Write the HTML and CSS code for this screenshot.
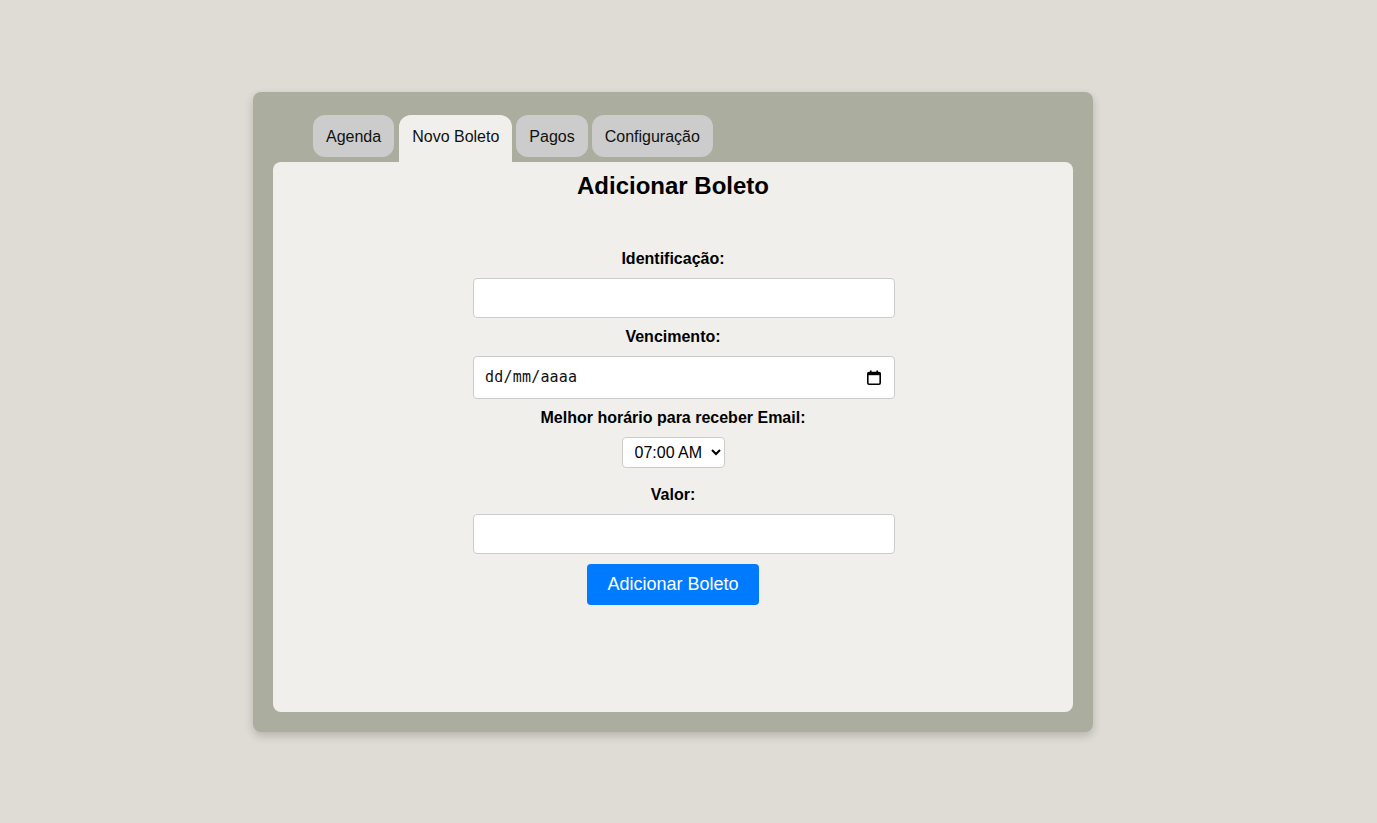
FILE: index.html
```html
<!DOCTYPE html>
<html lang="pt-BR">
<head>
<meta charset="utf-8">
<title>Boletos</title>
<link rel="stylesheet" href="styles.css">
</head>
<body>
  <div class="container">
    <div class="tabs">
      <div class="tab">Agenda</div>
      <div class="tab active">Novo Boleto</div>
      <div class="tab">Pagos</div>
      <div class="tab">Configuração</div>
    </div>
    <div class="panel">
      <h2 class="title">Adicionar Boleto</h2>
      <form class="form">
        <label class="label">Identificação:</label>
        <input class="field" type="text">
        <label class="label">Vencimento:</label>
        <div class="date-field">
          <input class="date-text" type="text" placeholder="dd/mm/aaaa">
          <svg class="cal-icon" width="14" height="15" viewBox="0 0 14 15">
            <rect x="3" y="0.5" width="1.6" height="2.5" fill="#000"/>
            <rect x="9.4" y="0.5" width="1.6" height="2.5" fill="#000"/>
            <rect x="0.8" y="2.6" width="12.4" height="11.6" rx="1.2" fill="none" stroke="#000" stroke-width="1.6"/>
            <rect x="0.8" y="2.6" width="12.4" height="2.6" fill="#000"/>
          </svg>
        </div>
        <label class="label">Melhor horário para receber Email:</label>
        <select class="time-select">
          <option>07:00 AM</option>
          <option>08:00 AM</option>
          <option>09:00 AM</option>
        </select>
        <label class="label">Valor:</label>
        <input class="field field-last" type="text">
        <button class="submit" type="button">Adicionar Boleto</button>
      </form>
    </div>
  </div>
</body>
</html>
```

FILE: styles.css
```css
* {
  font-family: "Liberation Sans", Arial, sans-serif;
}

html, body {
  margin: 0;
  padding: 0;
}

body {
  background: #dfdcd5;
  height: 100vh;
  display: flex;
  align-items: center;
  justify-content: center;
}

.container {
  width: 800px;
  height: 600px;
  padding: 20px;
  background: #abae9f;
  border-radius: 8px;
  box-shadow: 0 4px 10px rgba(0, 0, 0, 0.18);
  margin-right: 31px;
  display: flex;
  flex-direction: column;
}

.tabs {
  display: flex;
  align-items: flex-start;
  gap: 4px;
  padding: 3px 0 0 40px;
  height: 47px;
}

.tab {
  background: #cccccc;
  color: #111;
  font-size: 16px;
  line-height: 18px;
  padding: 13px 13px 11px;
  border-radius: 12px;
}

.tab:first-child {
  margin-right: 1px;
}

.tab.active {
  background: #f0efeb;
  border-radius: 12px 12px 0 0;
  padding-bottom: 16px;
}

.panel {
  flex: 1;
  background: #f0efeb;
  border-radius: 8px;
  padding: 10px;
}

.title {
  margin: 0 0 20px;
  font-size: 24px;
  font-weight: bold;
  line-height: 28px;
  text-align: center;
  color: #000;
}

.form {
  width: 400px;
  margin: 0 auto;
  padding-top: 29px;
  display: flex;
  flex-direction: column;
  align-items: center;
}

.label {
  display: block;
  font-size: 16px;
  font-weight: bold;
  line-height: 18px;
  color: #000;
  padding-top: 1px;
  margin: 0 0 10px;
}

.field {
  align-self: flex-start;
  width: 100%;
  box-sizing: content-box;
  padding: 10px;
  height: 18px;
  font-size: 16px;
  border: 1px solid #cccccc;
  border-radius: 4px;
  background: #fff;
  margin: 0 0 9px;
}

.field-last {
  margin-bottom: 10px;
}

.date-field {
  align-self: flex-start;
  width: 396px;
  box-sizing: content-box;
  padding: 0 13px 0 11px;
  height: 41px;
  border: 1px solid #cccccc;
  border-radius: 4px;
  background: #fff;
  margin: 0 0 9px;
  display: flex;
  align-items: center;
  justify-content: space-between;
}

.date-text {
  font-family: "DejaVu Sans Mono", "Liberation Mono", monospace;
  font-size: 15px;
  letter-spacing: 0.2px;
  border: none;
  outline: none;
  background: transparent;
  padding: 0;
  width: 200px;
  color: #000;
}

.date-text::placeholder {
  color: #111;
  opacity: 1;
}

.cal-icon {
  flex: none;
  display: block;
}

.time-select {
  font-size: 16px;
  padding: 5px 4px 5px 8px;
  height: 31px;
  border: 1px solid #cccccc;
  border-radius: 4px;
  background: #fff;
  color: #000;
  margin: 0 0 17px;
  width: 103px;
}

.submit {
  background: #007bff;
  color: #fff;
  border: none;
  border-radius: 4px;
  font-size: 18px;
  line-height: 21px;
  padding: 10px 20px;
  cursor: pointer;
}
```
